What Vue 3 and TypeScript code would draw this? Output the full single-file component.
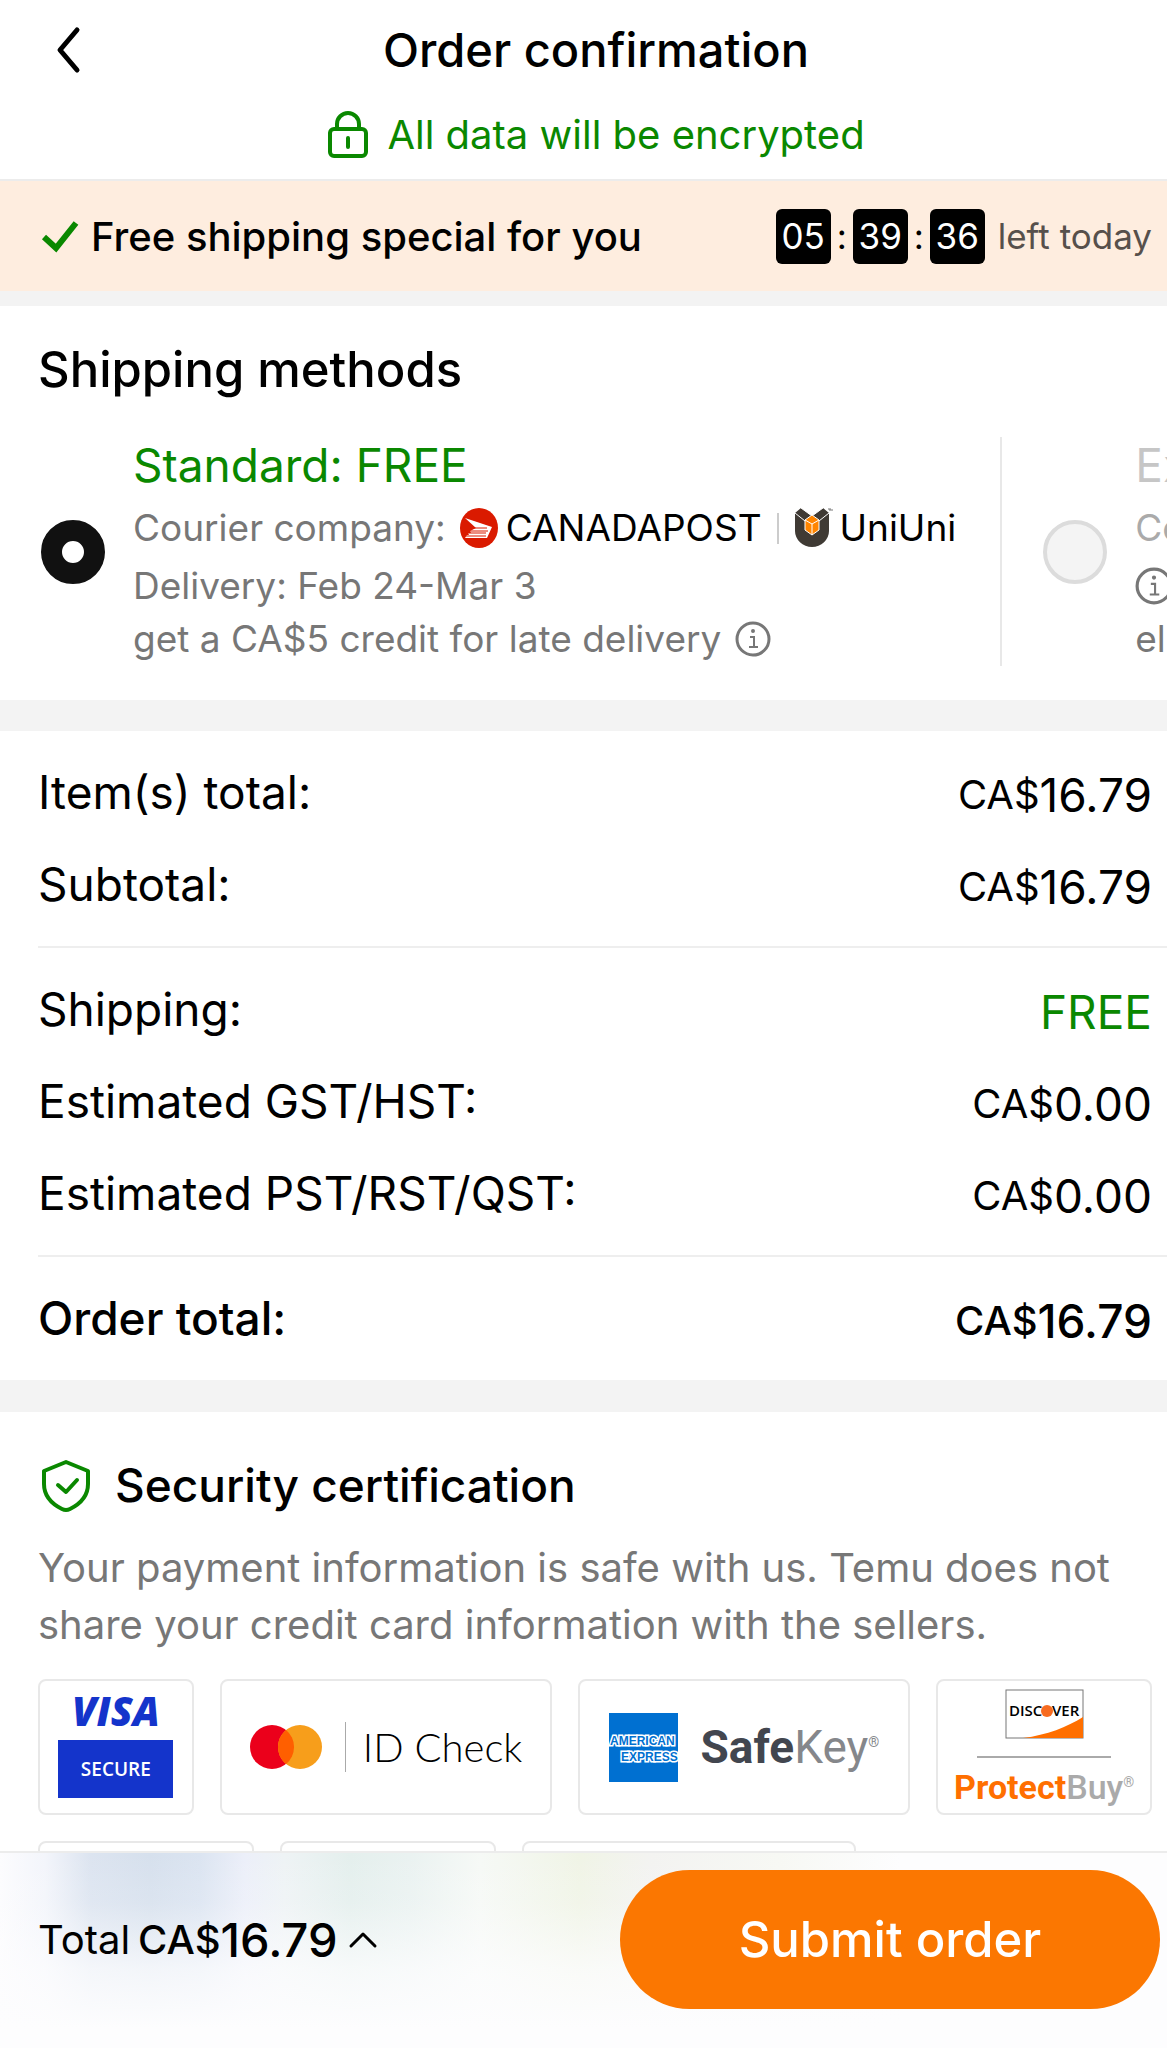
<script setup lang="ts">
import { ref } from 'vue'

interface SummaryRow {
  label: string
  currency: string
  value: string
  free?: boolean
}

const countdown: string[] = ['05', '39', '36']
const method = ref<string>('standard')
const expanded = ref<boolean>(false)

const groups: SummaryRow[][] = [
  [
    { label: 'Item(s) total:', currency: 'CA$', value: '16.79' },
    { label: 'Subtotal:', currency: 'CA$', value: '16.79' },
  ],
  [
    { label: 'Shipping:', currency: '', value: 'FREE', free: true },
    { label: 'Estimated GST/HST:', currency: 'CA$', value: '0.00' },
    { label: 'Estimated PST/RST/QST:', currency: 'CA$', value: '0.00' },
  ],
  [{ label: 'Order total:', currency: 'CA$', value: '16.79' }],
]
</script>

<template>
  <div class="page">
    <header class="header">
      <div class="title-bar">
        <button class="icon-button back" type="button" aria-label="Back">
          <svg width="28" height="48" viewBox="0 0 28 48" fill="none" stroke="#000" stroke-width="5" stroke-linecap="round" stroke-linejoin="round">
            <path d="M23 4 6 24l17 20" />
          </svg>
        </button>
        <h1 class="title">Order confirmation</h1>
      </div>
      <p class="encrypted">
        <svg width="42" height="48" viewBox="0 0 42 48" fill="none" stroke="#0a8800" stroke-width="4" stroke-linecap="round">
          <rect x="3" y="18" width="36" height="27" rx="4" />
          <path d="M10 17v-4a11 11 0 0 1 22 0v4M21 27v9" />
        </svg>
        <span>All data will be encrypted</span>
      </p>
    </header>

    <main class="content">
      <section class="banner">
        <svg width="38" height="34" viewBox="0 0 38 34" fill="none" stroke="#0a8800" stroke-width="6">
          <path d="M3 18l12 11L35 4" />
        </svg>
        <p class="banner-text">Free shipping special for you</p>
        <div class="timer">
          <template v-for="(part, i) in countdown" :key="i">
            <span v-if="i > 0" class="colon">:</span>
            <span class="digits">{{ part }}</span>
          </template>
          <span class="left">left today</span>
        </div>
      </section>

      <section class="shipping">
        <h2 class="heading">Shipping methods</h2>
        <div class="options">
          <div class="option">
            <input id="standard" v-model="method" class="radio" type="radio" name="method" value="standard" />
            <div class="details">
              <label class="option-name" for="standard">Standard: FREE</label>
              <p class="line">
                <span>Courier company:</span>
                <svg class="post" width="38" height="40" viewBox="0 0 38 40">
                  <ellipse cx="19" cy="20" rx="19" ry="20" fill="#da1a00" />
                  <path d="M5 10 32 19l-5 11H5l2-3h2l-1-2h3l-1-2 6-3z" fill="#fff" />
                  <path d="M13 20h14M9 23h19M8 25h18M6 28h20" stroke="#da1a00" stroke-width="1" />
                </svg>
                <span class="brand">CANADAPOST</span>
                <span class="bar"></span>
                <svg class="uni" width="38" height="40" viewBox="0 0 38 40">
                  <path d="M0 5 6 0l11 8L28 0l6 5v18a17 16 0 0 1-34 0z" fill="#3f3a34" />
                  <path d="M0 5l10 8M34 5l-10 8M6 0l11 8L28 0" stroke="#fff" stroke-width="1" fill="none" />
                  <path d="M17 7l7 5v10l-7 5-7-5V12z" fill="#ff8500" stroke="#fff" stroke-width="1" />
                  <path d="M10 12l7 4 7-4M17 16v11" stroke="#fff" stroke-width="1" fill="none" />
                  <path d="M33 1h3M35 1v2M37 3V1" stroke="#777" stroke-width="1" fill="none" />
                </svg>
                <span class="brand">UniUni</span>
              </p>
              <p class="line">Delivery: Feb 24-Mar 3</p>
              <p class="line credit">
                <span>get a CA$5 credit for late delivery</span>
                <button class="icon-button" type="button" aria-label="About delivery credit">
                  <svg width="36" height="36" viewBox="0 0 36 36" fill="none" stroke="#777" stroke-width="3">
                    <circle cx="18" cy="18" r="16" />
                    <path d="M15 16h4v10M14 26h9" stroke-width="2" />
                    <circle cx="18" cy="10" r="1" stroke-width="2" />
                  </svg>
                </button>
              </p>
            </div>
          </div>
          <div class="option option-off">
            <input id="express" v-model="method" class="radio" type="radio" name="method" value="express" disabled />
            <div class="details">
              <label class="option-name" for="express">Express</label>
              <p class="line faded">Courier</p>
              <p class="line">
                <button class="icon-button" type="button" aria-label="About express shipping">
                  <svg width="38" height="38" viewBox="0 0 36 36" fill="none" stroke="#777" stroke-width="3">
                    <circle cx="18" cy="18" r="16" />
                    <path d="M15 16h4v10M14 26h9" stroke-width="2" />
                    <circle cx="18" cy="10" r="1" stroke-width="2" />
                  </svg>
                </button>
              </p>
              <p class="line credit">eligible</p>
            </div>
          </div>
        </div>
      </section>

      <section class="summary">
        <dl v-for="(group, g) in groups" :key="g" class="group" :class="{ strong: g === groups.length - 1 }">
          <div v-for="row in group" :key="row.label" class="row">
            <dt>{{ row.label }}</dt>
            <dd class="amount" :class="{ free: row.free }">
              <span v-if="row.currency" class="currency">{{ row.currency }}</span>
              <span>{{ row.value }}</span>
            </dd>
          </div>
        </dl>
      </section>

      <section class="security">
        <h2 class="security-title">
          <svg width="52" height="56" viewBox="0 0 52 56" fill="none" stroke="#0a8800" stroke-width="4" stroke-linecap="round" stroke-linejoin="round">
            <path d="M28 5 50 14v13c0 12-8 20-18 25q-4 2-8 0C14 47 6 39 6 27V14z" />
            <path d="M20 28l8 7 11-12" />
          </svg>
          <span>Security certification</span>
        </h2>
        <p class="note">Your payment information is safe with us. Temu does not share your credit card information with the sellers.</p>

        <ul class="badges">
          <li class="badge visa">
            <span class="visa-name">VISA</span>
            <span class="visa-secure">SECURE</span>
          </li>
          <li class="badge idcheck">
            <svg width="72" height="44" viewBox="0 0 72 44">
              <circle cx="22" cy="22" r="22" fill="#eb001b" />
              <circle cx="50" cy="22" r="22" fill="#f79e1b" />
              <path d="M36 5a22 22 0 0 1 0 34a22 22 0 0 1 0-34z" fill="#ff5f00" />
            </svg>
            <span class="idcheck-bar"></span>
            <span class="idcheck-name">ID Check</span>
          </li>
          <li class="badge safekey">
            <svg width="69" height="69" viewBox="0 0 69 69">
              <rect width="69" height="69" fill="#0070d1" />
              <text x="1" y="32" class="amex-text">AMERICAN</text>
              <text x="12" y="48" class="amex-text">EXPRESS</text>
            </svg>
            <span class="safekey-name"><b>Safe</b>Key<small>®</small></span>
          </li>
          <li class="badge protect">
            <svg width="79" height="50" viewBox="0 0 79 50">
              <rect x="1" y="1" width="77" height="48" fill="#fff" stroke="#777" stroke-width="1" />
              <path d="M18 49C42 46 62 38 78 28v21z" fill="#ff6f00" />
              <text x="4" y="27" class="discover">DISC</text>
              <circle cx="42" cy="22" r="6" fill="#f76b20" />
              <text x="47" y="27" class="discover">VER</text>
            </svg>
            <span class="protect-rule"></span>
            <span class="protect-name"><b>Protect</b>Buy<small>®</small></span>
          </li>
        </ul>
        <ul class="badges more">
          <li class="badge"></li>
          <li class="badge"></li>
          <li class="badge wide"></li>
        </ul>
      </section>
    </main>

    <footer class="footer">
      <button class="total" type="button" :aria-expanded="expanded" @click="expanded = !expanded">
        <span>Total</span>
        <span class="total-amount"><span class="total-currency">CA$</span><span>16.79</span></span>
        <svg class="caret" width="30" height="18" viewBox="0 0 30 18" fill="none" stroke="#000" stroke-width="3" stroke-linecap="round" stroke-linejoin="round">
          <path d="M3 15 15 3l12 12" />
        </svg>
      </button>
      <button class="submit" type="button">Submit order</button>
    </footer>
  </div>
</template>

<style>
body {
  margin: 0;
  background: #fff;
}
</style>

<style scoped>
.page {
  display: flex;
  flex-direction: column;
  height: 100vh;
  overflow: hidden;
  background: #fff;
  color: #000;
  font-family: Inter, "Liberation Sans", sans-serif;
}
h1,
h2,
p,
dl,
dd,
ul {
  margin: 0;
  padding: 0;
}
ul {
  list-style: none;
}
svg {
  flex: none;
  display: block;
}
button {
  font: inherit;
  color: inherit;
}
.icon-button {
  display: block;
  padding: 0;
  border: 0;
  background: none;
}

.header {
  flex: none;
  padding: 22px 13px 18px 38px;
  border-bottom: 2px solid #ececec;
}
.title-bar {
  display: grid;
  grid-template-columns: 60px 1fr 60px;
  align-items: center;
}
.back {
  justify-self: center;
}
.title {
  font-size: 47px;
  line-height: 56px;
  font-weight: 500;
  text-align: center;
}
.encrypted {
  display: flex;
  align-items: center;
  justify-content: center;
  gap: 18px;
  margin-top: 31px;
  font-size: 40px;
  line-height: 52px;
  color: #0a8800;
}

.content {
  flex: 1;
  min-height: 0;
  overflow: hidden;
}
.banner {
  display: flex;
  align-items: center;
  height: 110px;
  padding: 0 15px 0 41px;
  background: #feeddf;
  border-bottom: 15px solid #f3f3f3;
}
.banner-text {
  margin-left: 12px;
  font-size: 40px;
  font-weight: 500;
  white-space: nowrap;
}
.timer {
  display: flex;
  align-items: center;
  margin-left: auto;
  font-size: 35px;
  white-space: nowrap;
}
.digits {
  width: 55px;
  border-radius: 6px;
  background: #000;
  color: #fff;
  line-height: 55px;
  text-align: center;
}
.colon {
  width: 22px;
  text-align: center;
}
.left {
  margin-left: 13px;
  color: #57504b;
}

.shipping {
  padding: 34px 0 34px 38px;
  border-bottom: 31px solid #f3f3f3;
}
.heading {
  font-size: 49px;
  line-height: 60px;
  font-weight: 500;
}
.options {
  display: flex;
  margin-top: 37px;
  overflow: hidden;
}
.option {
  display: flex;
  flex: none;
  align-items: center;
  gap: 28px;
  height: 229px;
  padding-right: 44px;
  padding-left: 3px;
  white-space: nowrap;
}
.option-off {
  padding-left: 41px;
  border-left: 2px solid #e8e8e8;
}
.radio {
  flex: none;
  appearance: none;
  width: 64px;
  height: 64px;
  margin: 0;
  border: 4px solid #dcdcdc;
  border-radius: 50%;
  background: #f4f4f4;
}
.radio:checked {
  border: 21px solid #111;
  background: #fff;
}
.details {
  align-self: flex-start;
}
.option-name {
  display: block;
  margin-bottom: 5px;
  font-size: 46px;
  line-height: 57px;
  color: #0a8800;
}
.option-off .option-name {
  color: #c6c6c6;
}
.line {
  display: flex;
  align-items: center;
  height: 58px;
  font-size: 37px;
  line-height: 58px;
  color: #777;
}
.faded {
  color: #aaa;
}
.credit {
  gap: 14px;
  height: 48px;
  line-height: 48px;
}
.post {
  margin: 0 8px 0 14px;
}
.brand {
  color: #000;
}
.bar {
  width: 2px;
  height: 31px;
  margin: 0 16px 0 15px;
  background: #ccc;
}
.uni {
  margin-right: 7px;
}

.summary {
  border-bottom: 32px solid #f3f3f3;
}
.group {
  display: grid;
  gap: 36px;
  margin-left: 38px;
  padding: 33px 15px 34px 0;
  font-size: 46px;
  line-height: 56px;
}
.group + .group {
  border-top: 2px solid #eee;
}
.strong {
  font-weight: 500;
}
.row {
  display: flex;
  align-items: flex-end;
  justify-content: space-between;
}
.amount {
  display: flex;
  align-items: center;
  line-height: 50px;
}
.currency {
  font-size: 40px;
}
.free {
  color: #0a8800;
}

.security {
  padding: 45px 15px 0 38px;
}
.security-title {
  display: flex;
  align-items: center;
  gap: 25px;
  font-size: 46px;
  line-height: 56px;
  font-weight: 500;
}
.note {
  margin-top: 26px;
  font-size: 40px;
  line-height: 57px;
  color: #777;
}
.badges {
  display: flex;
  gap: 26px;
  margin-top: 26px;
}
.badge {
  box-sizing: border-box;
  display: flex;
  align-items: center;
  justify-content: center;
  height: 136px;
  border: 2px solid #e8e8e8;
  border-radius: 8px;
  white-space: nowrap;
}
.more .badge {
  width: 216px;
}
.more .wide {
  width: 334px;
}
.visa {
  flex: 154 1 0;
  flex-direction: column;
  font-family: "Open Sans", sans-serif;
}
.visa-name {
  font-size: 40px;
  line-height: 30px;
  font-style: italic;
  font-weight: 800;
  color: #1434cb;
}
.visa-secure {
  width: 115px;
  margin-top: 14px;
  background: #1434cb;
  color: #fff;
  font-size: 19px;
  line-height: 58px;
  font-weight: 600;
  text-align: center;
}
.idcheck {
  flex: 334 1 0;
}
.idcheck-bar {
  width: 1px;
  height: 50px;
  margin: 0 17px 0 23px;
  background: #aaa;
}
.idcheck-name {
  font-family: Lato, sans-serif;
  font-size: 40px;
  font-weight: 300;
}
.safekey {
  flex: 333 1 0;
  gap: 22px;
}
.amex-text {
  font-family: "Liberation Sans", sans-serif;
  font-size: 12px;
  font-weight: 700;
  fill: #0070d1;
  stroke: #fff;
  stroke-width: 3px;
  paint-order: stroke;
}
.safekey-name {
  font-family: Roboto, sans-serif;
  font-size: 46px;
  color: #85878b;
}
.safekey-name b {
  color: #42464f;
}
small {
  font-size: 14px;
  vertical-align: super;
}
.protect {
  flex: 215 1 0;
  flex-direction: column;
}
.discover {
  font-family: "Open Sans", sans-serif;
  font-size: 15px;
  font-weight: 600;
}
.protect-rule {
  width: 134px;
  height: 2px;
  margin-top: 17px;
  background: #aaa;
}
.protect-name {
  margin-top: 6px;
  font-family: Roboto, sans-serif;
  font-size: 34px;
  line-height: 36px;
  font-weight: 500;
  color: #aaa;
}
.protect-name b {
  color: #ff6f00;
}

.footer {
  display: flex;
  flex: none;
  align-items: center;
  justify-content: space-between;
  padding: 17px 7px 39px 38px;
  border-top: 2px solid #ececec;
  background:
    linear-gradient(to bottom, #fdfdfe00 0, #fdfdfe22 50px, #fdfdfebb 115px, #fdfdfe 175px),
    linear-gradient(
      to right,
      #fcfcfe 0,
      #f3f5fb 45px,
      #dce4f0 90px,
      #d6e0ed 150px,
      #dbe4f1 200px,
      #eceff9 245px,
      #eef3f5 285px,
      #e4efed 350px,
      #eaf2f1 410px,
      #f6f9f6 480px,
      #f0f4e6 580px,
      #f3f3f1 650px,
      #f7f8f4 780px,
      #fdfdfe 900px
    );
}
.total {
  display: flex;
  align-items: center;
  gap: 8px;
  padding: 0;
  border: 0;
  background: none;
  font-size: 40px;
  white-space: nowrap;
}
.total-amount {
  display: flex;
  align-items: center;
  font-size: 47px;
  font-weight: 500;
}
.total-currency {
  font-size: 40px;
}
.caret {
  margin-left: 2px;
}
.submit {
  flex: 0 1 540px;
  height: 139px;
  border: 0;
  border-radius: 70px;
  background: #fb7701;
  color: #fff;
  font-size: 49px;
  font-weight: 500;
}
</style>
